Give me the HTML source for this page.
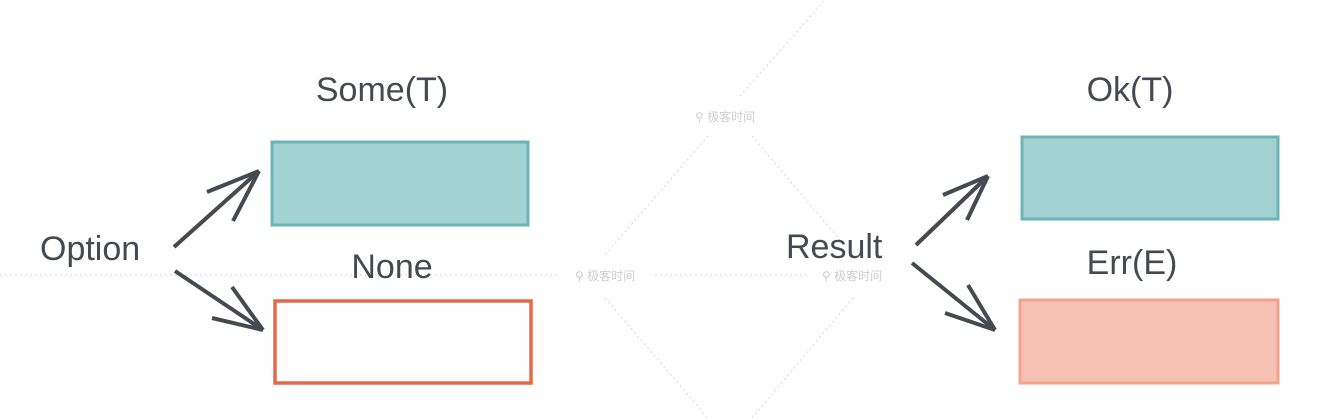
<!DOCTYPE html>
<html><head><meta charset="utf-8"><style>
html,body{margin:0;padding:0;background:#fff;width:1336px;height:418px;overflow:hidden}
svg{display:block}
text{font-family:"Liberation Sans",Arial,sans-serif;fill:#454a50}
.wm{font-family:"Liberation Sans","Noto Sans CJK SC",sans-serif;fill:#cfcfcf;font-size:12px}
</style></head><body>
<svg width="1336" height="418" viewBox="0 0 1336 418">
<g stroke="#d8d8d8" stroke-width="1" stroke-dasharray="2 3" fill="none">
<line x1="0" y1="275" x2="560" y2="275"/>
<line x1="655" y1="275" x2="808" y2="275"/>
<line x1="740" y1="96" x2="825" y2="0"/>
<line x1="708" y1="136" x2="605" y2="255"/>
<line x1="752" y1="136" x2="840" y2="240"/>
<line x1="605" y1="298" x2="708" y2="418"/>
<line x1="853" y1="298" x2="752" y2="418"/>
</g>
<text class="wm" x="695" y="121">⚲ 极客时间</text>
<text class="wm" x="575" y="280">⚲ 极客时间</text>
<text class="wm" x="822" y="280">⚲ 极客时间</text>

<rect x="272" y="142" width="256" height="83" fill="#a3d2d3" stroke="#6db5b5" stroke-width="3"/>
<rect x="275" y="301" width="256" height="82" fill="#fff" stroke="#e4694b" stroke-width="3.5"/>
<rect x="1022" y="137" width="256" height="82" fill="#a3d2d3" stroke="#6db5b5" stroke-width="3"/>
<rect x="1020" y="300" width="258" height="83" fill="#f7c1b3" stroke="#f3a48f" stroke-width="3"/>

<g stroke="#454a50" stroke-width="4" fill="none" stroke-linecap="butt">
<line x1="174" y1="247" x2="259" y2="171"/>
<line x1="207" y1="192" x2="259" y2="171"/>
<line x1="233" y1="221" x2="259" y2="171"/>
<line x1="175" y1="271" x2="263" y2="330"/>
<line x1="232" y1="287" x2="263" y2="330"/>
<line x1="212" y1="318" x2="263" y2="330"/>
<line x1="916" y1="245" x2="988" y2="176"/>
<line x1="943" y1="195" x2="988" y2="176"/>
<line x1="967" y1="220" x2="988" y2="176"/>
<line x1="912" y1="263" x2="995" y2="330"/>
<line x1="968" y1="285" x2="995" y2="330"/>
<line x1="945" y1="313" x2="995" y2="330"/>
</g>

<g font-size="34">
<text x="40" y="260">Option</text>
<text x="382" y="101" text-anchor="middle">Some(T)</text>
<text x="392" y="278" text-anchor="middle">None</text>
<text x="786" y="258">Result</text>
<text x="1130" y="101" text-anchor="middle">Ok(T)</text>
<text x="1132" y="274" text-anchor="middle">Err(E)</text>
</g>
</svg>
</body></html>
